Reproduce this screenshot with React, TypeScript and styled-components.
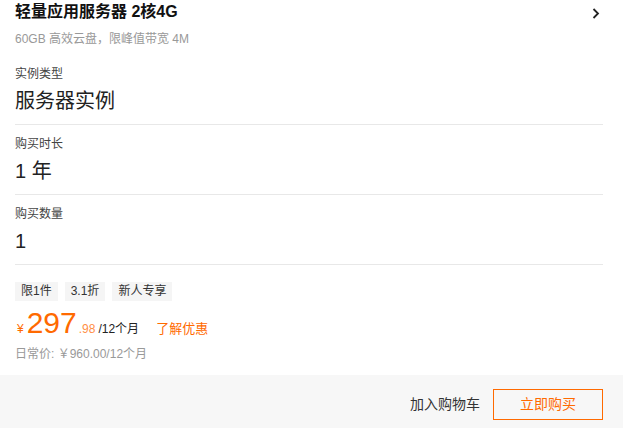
import React from "react";
import styled, { createGlobalStyle } from "styled-components";

const Global = createGlobalStyle`
  html, body { margin: 0; padding: 0; background: #fff; }
  body { font-family: "Liberation Sans", "Noto Sans CJK SC", sans-serif; color: #333; }
`;

const ORANGE = "#ff6a00";

const Page = styled.div`
  width: 623px;
  height: 428px;
  display: flex;
  flex-direction: column;
  overflow: hidden;
`;

const Content = styled.div`
  flex: 1;
  padding: 0 20px 0 15px;
`;

const Header = styled.div`
  display: flex;
  align-items: flex-start;
  justify-content: space-between;
  height: 55px;
`;

const HeaderText = styled.div`
  display: flex;
  flex-direction: column;
`;

const Title = styled.div`
  font-size: 16px;
  font-weight: bold;
  line-height: 24px;
  color: #111;
`;

const Subtitle = styled.div`
  margin-top: 6px;
  font-size: 12px;
  line-height: 18px;
  color: #999;
`;

const Chevron = styled.svg`
  margin-top: 8px;
  margin-right: 3px;
`;

const Section = styled.div`
  padding: 10px 0 9px;
  border-bottom: 1px solid #e8e8e8;
`;

const Label = styled.div`
  font-size: 12px;
  line-height: 18px;
  color: #444;
`;

const Value = styled.div`
  margin-top: 4px;
  font-size: 20px;
  line-height: 28px;
  color: #222;
`;

const PriceBlock = styled.div`
  padding-top: 17px;
`;

const Tags = styled.div`
  display: flex;
  gap: 7px;
`;

const Tag = styled.span`
  display: inline-block;
  height: 19px;
  line-height: 19px;
  padding: 0 6px;
  font-size: 12px;
  color: #333;
  background: #f5f5f5;
`;

const PriceRow = styled.div`
  margin-top: 4px;
  display: flex;
  align-items: baseline;
  height: 36px;
  line-height: 36px;
`;

const Currency = styled.span`
  font-size: 12px;
  color: ${ORANGE};
  margin: 0 3px 0 2px;
`;

const Big = styled.span`
  font-size: 30px;
  color: ${ORANGE};
`;

const Cents = styled.span`
  font-size: 12px;
  color: ${ORANGE};
  margin-left: 2px;
  opacity: 0.75;
`;

const Unit = styled.span`
  font-size: 12px;
  color: #222;
  margin-left: 3px;
`;

const Link = styled.span`
  font-size: 13px;
  color: ${ORANGE};
  margin-left: 17px;
`;

const OldPrice = styled.div`
  margin-top: 4px;
  font-size: 12px;
  line-height: 18px;
  color: #999;
`;

const Footer = styled.div`
  height: 53px;
  box-sizing: border-box;
  background: #f7f7f7;
  display: flex;
  align-items: flex-start;
  justify-content: flex-end;
  padding: 14px 20px 0 0;
`;

const TextButton = styled.span`
  font-size: 14px;
  line-height: 31px;
  color: #333;
  margin-right: 13px;
`;

const BuyButton = styled.div`
  width: 110px;
  height: 31px;
  box-sizing: border-box;
  border: 1px solid ${ORANGE};
  color: ${ORANGE};
  font-size: 14px;
  line-height: 29px;
  text-align: center;
`;

export default function App() {
  return (
    <Page>
      <Global />
      <Content>
        <Header>
          <HeaderText>
            <Title>轻量应用服务器 2核4G</Title>
            <Subtitle>60GB 高效云盘，限峰值带宽 4M</Subtitle>
          </HeaderText>
          <Chevron width="8" height="11" viewBox="0 0 8 11">
            <path d="M1.5 1 L6 5.5 L1.5 10" fill="none" stroke="#222" strokeWidth="1.8" />
          </Chevron>
        </Header>
        <Section>
          <Label>实例类型</Label>
          <Value>服务器实例</Value>
        </Section>
        <Section>
          <Label>购买时长</Label>
          <Value>1 年</Value>
        </Section>
        <Section>
          <Label>购买数量</Label>
          <Value>1</Value>
        </Section>
        <PriceBlock>
          <Tags>
            <Tag>限1件</Tag>
            <Tag>3.1折</Tag>
            <Tag>新人专享</Tag>
          </Tags>
          <PriceRow>
            <Currency>¥</Currency>
            <Big>297</Big>
            <Cents>.98</Cents>
            <Unit>/12个月</Unit>
            <Link>了解优惠</Link>
          </PriceRow>
          <OldPrice>日常价: ￥960.00/12个月</OldPrice>
        </PriceBlock>
      </Content>
      <Footer>
        <TextButton>加入购物车</TextButton>
        <BuyButton>立即购买</BuyButton>
      </Footer>
    </Page>
  );
}
